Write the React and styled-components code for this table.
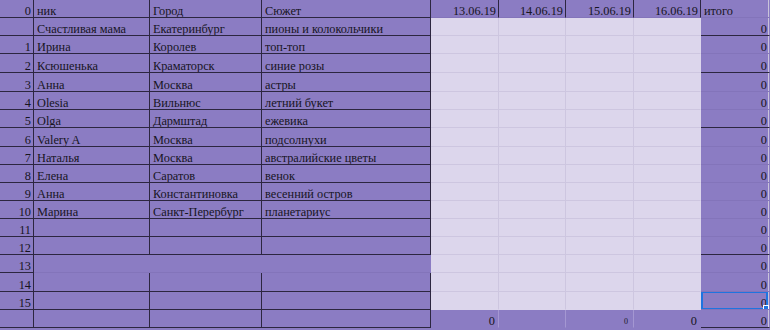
import React from "react";
import styled, { createGlobalStyle, css } from "styled-components";

const PURPLE = "#8b7cc3";
const LAV = "#dcd6ec";
const DARK = "#2c2640";
const FAINT_LAV = "#cdc6e0";
const FAINT_PUR = "#8374ba";
const LIGHT_ON_PUR = "#a497d2";
const BLUE = "#1f74e0";

const Global = createGlobalStyle`
  html, body { margin: 0; padding: 0; background: ${PURPLE}; }
  body { font-family: "Liberation Serif", "Times New Roman", serif; }
`;

const COLS = [34, 116, 112, 169, 68, 67, 68, 67, 69];
const ROWS = [18, 18, 18, 19, 19, 18, 18, 19, 18, 18, 18, 18, 18, 18, 18, 19, 18, 18];

const Sheet = styled.div`
  display: grid;
  grid-template-columns: ${COLS.map((c) => c + "px").join(" ")};
  grid-template-rows: ${ROWS.map((r) => r + "px").join(" ")};
  width: 770px;
  height: 330px;
  overflow: hidden;
  background: ${PURPLE};
  color: #17151f;
  font-size: 12.3px;
`;

const Cell = styled.div`
  position: relative;
  box-sizing: border-box;
  display: flex;
  align-items: flex-end;
  justify-content: ${(p) => (p.$right ? "flex-end" : "flex-start")};
  padding: ${(p) => (p.$right ? "0 2px 0 0" : "0 0 0 3px")};
  background: ${(p) => (p.$lav ? LAV : PURPLE)};
  border-right: 1px solid ${(p) => p.$rb || "transparent"};
  border-bottom: 1px solid ${(p) => p.$bb || "transparent"};
  line-height: 12px;
  white-space: nowrap;
  overflow: hidden;
  ${(p) =>
    p.$edge &&
    css`
      box-shadow: inset -1px 0 0 #c9c3da;
    `}
`;

const Num = styled.span`
  display: block;
  padding-bottom: ${(p) => (p.$lift ? 1 : 0)}px;
  padding-right: ${(p) => p.$pr || 0}px;
`;

const Tiny = styled.span`
  font-size: 8px;
  line-height: 8px;
  padding-right: 3px;
  padding-bottom: 1px;
`;

const Selection = styled.div`
  position: absolute;
  left: 0;
  top: -1px;
  right: 1px;
  bottom: -1px;
  border: 2px solid ${BLUE};
  pointer-events: none;
`;

const Handle = styled.div`
  position: absolute;
  right: -3px;
  bottom: -3px;
  width: 4px;
  height: 4px;
  background: ${BLUE};
  border: 1px solid #fff;
`;

const people = [
  ["", "Счастливая мама", "Екатеринбург", "пионы и колокольчики"],
  ["1", "Ирина", "Королев", "топ-топ"],
  ["2", "Ксюшенька", "Краматорск", "синие розы"],
  ["3", "Анна", "Москва", "астры"],
  ["4", "Olesia", "Вильнюс", "летний букет"],
  ["5", "Olga", "Дармштад", "ежевика"],
  ["6", "Valery A", "Москва", "подсолнухи"],
  ["7", "Наталья", "Москва", "австралийские цветы"],
  ["8", "Елена", "Саратов", "венок"],
  ["9", "Анна", "Константиновка", "весенний остров"],
  ["10", "Марина", "Санкт-Перербург", "планетариус"],
  ["11", "", "", ""],
  ["12", "", "", ""],
  ["13", "", "", ""],
  ["14", "", "", ""],
  ["15", "", "", ""],
];

const dates = ["13.06.19", "14.06.19", "15.06.19", "16.06.19"];
const darkTotalRows = new Set([0, 2, 5, 12]);

export default function App() {
  const cells = [];

  cells.push(
    <Cell key="h0" $right $rb={DARK} $bb={DARK}>
      <Num>0</Num>
    </Cell>
  );
  ["ник", "Город", "Сюжет"].forEach((t, i) =>
    cells.push(
      <Cell key={"h" + (i + 1)} $rb={DARK} $bb={DARK}>
        <Num>{t}</Num>
      </Cell>
    )
  );
  dates.forEach((d, i) =>
    cells.push(
      <Cell key={"hd" + i} $right $rb={DARK} $bb={FAINT_PUR}>
        <Num>{d}</Num>
      </Cell>
    )
  );
  cells.push(
    <Cell key="htot" $bb={FAINT_PUR} $edge>
      <Num>итого</Num>
    </Cell>
  );

  people.forEach((row, r) => {
    const merged = row[0] === "13";
    const last = r === people.length - 1;
    cells.push(
      <Cell key={"n" + r} $right $rb={DARK} $bb={DARK}>
        <Num>{row[0]}</Num>
      </Cell>
    );
    [1, 2, 3].forEach((c) =>
      cells.push(
        <Cell
          key={"c" + r + "-" + c}
          $rb={merged ? (c === 3 ? "transparent" : PURPLE) : DARK}
          $bb={merged ? FAINT_PUR : DARK}
        >
          <Num>{row[c]}</Num>
        </Cell>
      )
    );
    dates.forEach((d, i) =>
      cells.push(
        <Cell
          key={"d" + r + "-" + i}
          $lav
          $rb={i === 3 ? "transparent" : FAINT_LAV}
          $bb={last ? "transparent" : FAINT_LAV}
        />
      )
    );
    cells.push(
      <Cell
        key={"t" + r}
        $right
        $edge
        $bb={darkTotalRows.has(r) ? DARK : FAINT_PUR}
      >
        <Num>0</Num>
        {last && (
          <Selection>
            <Handle />
          </Selection>
        )}
      </Cell>
    );
  });

  cells.push(<Cell key="f0" $right $rb={DARK} $bb={DARK} />);
  [1, 2, 3].forEach((c) => cells.push(<Cell key={"f" + c} $rb={DARK} $bb={DARK} />));
  cells.push(
    <Cell key="fd0" $right $rb={LIGHT_ON_PUR}>
      <Num $pr={1}>0</Num>
    </Cell>
  );
  cells.push(<Cell key="fd1" $right $rb={LIGHT_ON_PUR} />);
  cells.push(
    <Cell key="fd2" $right $rb={LIGHT_ON_PUR}>
      <Tiny>0</Tiny>
    </Cell>
  );
  cells.push(
    <Cell key="fd3" $right>
      <Num $pr={1}>0</Num>
    </Cell>
  );
  cells.push(
    <Cell key="ftot" $right $edge $bb={DARK}>
      <Num>0</Num>
    </Cell>
  );

  return (
    <>
      <Global />
      <Sheet>{cells}</Sheet>
    </>
  );
}
